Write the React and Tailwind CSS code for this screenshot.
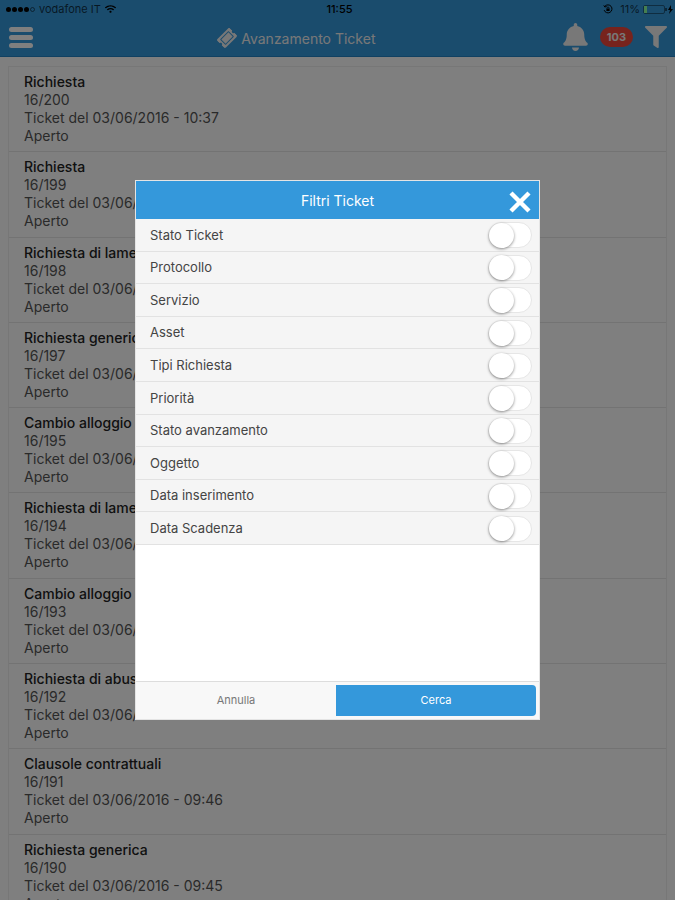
import React, { useState } from 'react';
import { FaBell, FaFilter, FaTicketAlt, FaWifi } from 'react-icons/fa';

const tickets = [
  { id: '16/200', title: 'Richiesta', time: '10:37' },
  { id: '16/199', title: 'Richiesta', time: '10:36' },
  { id: '16/198', title: 'Richiesta di lamentela', time: '10:21' },
  { id: '16/197', title: 'Richiesta generica', time: '10:15' },
  { id: '16/195', title: 'Cambio alloggio', time: '10:02' },
  { id: '16/194', title: 'Richiesta di lamentela', time: '09:58' },
  { id: '16/193', title: 'Cambio alloggio', time: '09:51' },
  { id: '16/192', title: 'Richiesta di abuso', time: '09:48' },
  { id: '16/191', title: 'Clausole contrattuali', time: '09:46' },
  { id: '16/190', title: 'Richiesta generica', time: '09:45' },
];

const filters = [
  'Stato Ticket',
  'Protocollo',
  'Servizio',
  'Asset',
  'Tipi Richiesta',
  'Priorità',
  'Stato avanzamento',
  'Oggetto',
  'Data inserimento',
  'Data Scadenza',
];

const StatusBar = () => (
  <div className="grid grid-cols-3 items-center h-[18px] pl-1.5 pr-0.5 text-[11px] leading-[18px] text-black">
    <div className="flex items-center gap-1">
      <div className="flex gap-px">
        {[1, 2, 3, 4].map((n) => (
          <span key={n} className="w-[5px] h-[5px] rounded-full bg-black"></span>
        ))}
        <span className="w-[5px] h-[5px] rounded-full border border-black/50"></span>
      </div>
      <span className="text-black/70">vodafone IT</span>
      <FaWifi className="w-[11px] h-[10px]" />
    </div>
    <span className="text-center font-medium">11:55</span>
    <div className="flex items-center justify-end gap-[3px]">
      <svg viewBox="0 0 10 10" className="w-[10px] h-[10px] mr-1" fill="none" stroke="currentColor">
        <path d="M1.2 6.2A4 4 0 1 0 2 2.2M0.8 1.4l1 1.6 1.8-.5" />
        <rect x="3.4" y="4.6" width="3.2" height="2.4" fill="currentColor" stroke="none" />
        <path d="M4 4.8V4a1 1 0 0 1 2 0v.8" strokeWidth="0.7" />
      </svg>
      <span className="text-black/70">11%</span>
      <svg viewBox="0 0 30 9" className="w-[30px] h-[9px]" fill="none">
        <rect x="0.5" y="0.5" width="21" height="8" rx="1.5" stroke="#000" strokeOpacity="0.4" />
        <rect x="1" y="1" width="3" height="7" fill="#8cffa0" />
        <path d="M23 3v3" stroke="#000" />
        <path d="M28 0l-3 5h2l-1 4 4-5h-2z" fill="#000" />
      </svg>
    </div>
  </div>
);

const Header = () => (
  <header className="bg-[#3498db] border-b border-[#2383c4] shrink-0">
    <StatusBar />
    <div className="flex items-center h-[38px] px-2">
      <button aria-label="Menu" className="flex flex-col gap-[3px] w-[26px] p-px">
        <span className="h-[5px] w-full rounded-sm bg-white"></span>
        <span className="h-[5px] w-full rounded-sm bg-white"></span>
        <span className="h-[5px] w-full rounded-sm bg-white"></span>
      </button>
      <h1 className="flex-1 flex items-center justify-center gap-1 pt-0.5 text-[14px] text-[#f0f0f0]">
        <span className="flex items-center justify-center w-5 h-5">
          <FaTicketAlt className="w-[18px] h-[18px] -rotate-45" />
        </span>
        Avanzamento Ticket
      </h1>
      <div className="flex items-center justify-end gap-3 pl-1 text-[#f0f0f0]">
        <button aria-label="Notifiche"><FaBell className="w-[25px] h-7" /></button>
        <span className="h-5 px-[7px] rounded-full bg-[#ef473a] text-[11px] leading-5 font-bold">103</span>
        <button aria-label="Filtra"><FaFilter className="w-[22px] h-[22px]" /></button>
      </div>
    </div>
  </header>
);

const FilterModal = () => {
  const [active, setActive] = useState({});

  const toggle = (name) => setActive((prev) => ({ ...prev, [name]: !prev[name] }));

  return (
    <div className="fixed inset-0 flex items-center justify-center bg-black/50">
      <div role="dialog" aria-label="Filtri Ticket" className="w-3/5 h-3/5 flex flex-col bg-white border border-[#e4e4e4]">
        <div className="grid grid-cols-[1fr_auto_1fr] items-center h-[38px] px-2 bg-[#3498db] text-white shrink-0">
          <h2 className="col-start-2 text-[14px]">Filtri Ticket</h2>
          <button aria-label="Chiudi" className="justify-self-end pt-1">
            <svg viewBox="0 0 22 22" className="w-[22px] h-[22px]" stroke="currentColor" strokeWidth="4.4">
              <path d="M2 2l18 18M20 2L2 20" />
            </svg>
          </button>
        </div>

        <div className="flex-1 min-h-0 overflow-hidden">
          <ul className="flex flex-col h-[326px]">
            {filters.map((name) => (
              <li key={name} className="flex-1 border-b border-[#e2e2e2] bg-[#f5f5f5]">
                <label className="flex items-center justify-between h-full pt-px pl-3.5 pr-[7px] text-[13px] text-[#444]">
                  {name}
                  <input
                    type="checkbox"
                    checked={!!active[name]}
                    onChange={() => toggle(name)}
                    className="appearance-none flex items-center w-11 h-[26px] rounded-full border border-[#e6e6e6] bg-white checked:bg-[#3498db] before:w-[25px] before:h-[25px] before:rounded-full before:bg-white before:shadow-[0_1px_3px_rgba(0,0,0,0.45)] checked:before:ml-auto"
                  />
                </label>
              </li>
            ))}
          </ul>
        </div>

        <div className="grid grid-cols-2 h-[38px] py-[3px] pr-[3px] border-t border-[#ddd] bg-[#f8f8f8] text-[11px] shrink-0">
          <button className="text-[#777]">Annulla</button>
          <button className="bg-[#3498db] text-white rounded-r-sm">Cerca</button>
        </div>
      </div>
    </div>
  );
};

const App = () => {
  return (
    <div className="h-screen flex flex-col overflow-hidden bg-white font-['Inter',sans-serif]">
      <Header />
      <main className="flex-1 min-h-0 overflow-hidden px-2 pt-[9px]">
        <ul className="flex flex-col h-[855px] border border-[#efefef]">
          {tickets.map((t) => (
            <li key={t.id} className="flex-1 px-[15px] pt-[6px] border-b border-[#e6e6e6] text-[14px] leading-[18px] text-[#555]">
              <h3 className="font-medium text-[#222]">{t.title}</h3>
              <p>{t.id}</p>
              <p>Ticket del 03/06/2016 - {t.time}</p>
              <p>Aperto</p>
            </li>
          ))}
        </ul>
      </main>
      <FilterModal />
    </div>
  );
};

export default App;
